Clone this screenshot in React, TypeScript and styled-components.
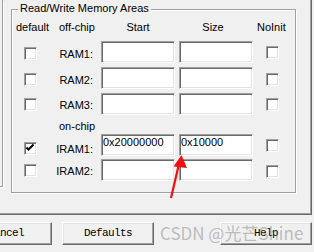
import React from "react";
import styled, { createGlobalStyle } from "styled-components";

const GlobalStyle = createGlobalStyle`
  html, body { margin: 0; padding: 0; background: #f0f0f0; }
  body { width: 314px; height: 252px; overflow: hidden; }
  #root { width: 314px; height: 252px; }
`;

const Dialog = styled.div`
  position: relative;
  width: 314px;
  height: 252px;
  overflow: hidden;
  background: #f0f0f0;
  font-family: "Liberation Sans", Arial, sans-serif;
  font-size: 11px;
  line-height: 13px;
  color: #000;
`;

const TabPage = styled.div`
  box-sizing: border-box;
  width: 312px;
  height: 215px;
  display: flex;
  align-items: flex-start;
  border-right: 1px solid #696969;
  border-bottom: 1px solid #696969;
  box-shadow: inset -1px -1px 0 #a0a0a0;
`;

const SideGroup = styled.div`
  box-sizing: border-box;
  flex: none;
  width: 3px;
  height: 187px;
  border-right: 1px solid #a0a0a0;
  border-bottom: 1px solid #a0a0a0;
  box-shadow: 1px 1px 0 #fff;
`;

const MemoryGroup = styled.div`
  position: relative;
  box-sizing: border-box;
  flex: none;
  width: 285px;
  height: 184px;
  margin: 9px 0 0 8px;
  padding: 10px 0 0 4px;
  border: 1px solid #a0a0a0;
  box-shadow: inset 1px 1px 0 #fff, 1px 1px 0 #fff;
`;

const GroupTitle = styled.span`
  position: absolute;
  top: -8px;
  left: 6px;
  padding: 0 2px;
  background: #f0f0f0;
  white-space: nowrap;
`;

const Grid = styled.div`
  display: grid;
  grid-template-columns: 35px 42px 74px 74px 34px;
  grid-template-rows: 21px 26px 26px 26px 15px 25px 22px;
  column-gap: 4px;
`;

const Header = styled.div<{ $align?: "left" | "center"; $pl?: number; $pr?: number }>`
  padding-top: 1px;
  padding-left: ${(p) => p.$pl ?? 0}px;
  padding-right: ${(p) => p.$pr ?? 0}px;
  text-align: ${(p) => p.$align ?? "left"};
  white-space: nowrap;
`;

const SectionLabel = styled.div`
  grid-column: 1 / -1;
  padding: 1px 0 0 43px;
  white-space: nowrap;
`;

const RowLabel = styled.div<{ $top: number }>`
  padding-top: ${(p) => p.$top}px;
  padding-right: 4px;
  text-align: right;
  white-space: nowrap;
`;

const CheckBox = styled.div<{ $top: number; $left: number }>`
  box-sizing: border-box;
  width: 13px;
  height: 13px;
  margin-top: ${(p) => p.$top}px;
  margin-left: ${(p) => p.$left}px;
  background: #fff;
  border: 1px solid;
  border-color: #a0a0a0 #fff #fff #a0a0a0;
  box-shadow: inset 1px 1px 0 #696969, inset -1px -1px 0 #e3e3e3;
  display: flex;
`;

const Edit = styled.div`
  box-sizing: border-box;
  height: 22px;
  padding: 1px 0 0 1px;
  background: #fff;
  border: 1px solid;
  border-color: #a0a0a0 #fff #fff #a0a0a0;
  box-shadow: inset 1px 1px 0 #696969, inset -1px -1px 0 #e3e3e3;
  white-space: nowrap;
  overflow: hidden;
`;

const ButtonRow = styled.div`
  display: flex;
  margin-top: 7px;
`;

const Button = styled.div<{ $ml: number }>`
  box-sizing: border-box;
  flex: none;
  width: 92px;
  height: 23px;
  margin-left: ${(p) => p.$ml}px;
  background: #f0f0f0;
  border: 1px solid;
  border-color: #fff #696969 #696969 #fff;
  box-shadow: inset -1px -1px 0 #a0a0a0, inset 1px 1px 0 #e3e3e3;
  font-family: "Liberation Mono", "Courier New", monospace;
  font-size: 11px;
  letter-spacing: -0.6px;
  line-height: 21px;
  text-align: center;
  white-space: nowrap;
`;

const Watermark = styled.div`
  position: absolute;
  left: 160px;
  top: 223px;
  font-family: "Noto Sans CJK SC", "Liberation Sans", sans-serif;
  font-size: 17px;
  line-height: 20px;
  color: rgba(110, 110, 110, 0.42);
  white-space: nowrap;
  pointer-events: none;
`;

const ArrowSvg = styled.svg`
  position: absolute;
  left: 165px;
  top: 150px;
  overflow: visible;
  pointer-events: none;
`;

const CheckMark = () => (
  <svg width="11" height="11" viewBox="0 0 11 11">
    <polyline points="1.5,4.5 3.5,6.5 8.5,1.5" fill="none" stroke="#000" strokeWidth="2" />
  </svg>
);

type Row = {
  label: string;
  start?: string;
  size?: string;
  checked?: boolean;
  lblTop: number;
  defTop: number;
  niTop: number;
};

const offChip: Row[] = [
  { label: "RAM1:", lblTop: 7, defTop: 6, niTop: 5 },
  { label: "RAM2:", lblTop: 7, defTop: 6, niTop: 6 },
  { label: "RAM3:", lblTop: 6, defTop: 5, niTop: 5 },
];

const onChip: Row[] = [
  { label: "IRAM1:", start: "0x20000000", size: "0x10000", checked: true, lblTop: 9, defTop: 8, niTop: 5 },
  { label: "IRAM2:", lblTop: 6, defTop: 5, niTop: 6 },
];

const MemoryRow = ({ row }: { row: Row }) => (
  <>
    <CheckBox $top={row.defTop} $left={8}>{row.checked ? <CheckMark /> : null}</CheckBox>
    <RowLabel $top={row.lblTop}>{row.label}</RowLabel>
    <Edit>{row.start ?? ""}</Edit>
    <Edit>{row.size ?? ""}</Edit>
    <CheckBox $top={row.niTop} $left={9} />
  </>
);

export default function App() {
  return (
    <>
      <GlobalStyle />
      <Dialog>
        <TabPage>
          <SideGroup />
          <MemoryGroup>
            <GroupTitle>Read/Write Memory Areas</GroupTitle>
            <Grid>
              <Header>default</Header>
              <Header $pl={4}>off-chip</Header>
              <Header $align="center">Start</Header>
              <Header $align="center" $pr={6}>Size</Header>
              <Header>NoInit</Header>
              {offChip.map((r) => (
                <MemoryRow key={r.label} row={r} />
              ))}
              <SectionLabel>on-chip</SectionLabel>
              {onChip.map((r) => (
                <MemoryRow key={r.label} row={r} />
              ))}
            </Grid>
          </MemoryGroup>
        </TabPage>
        <ButtonRow>
          <Button $ml={-40}>Cancel</Button>
          <Button $ml={10}>Defaults</Button>
          <Button $ml={66}>Help</Button>
        </ButtonRow>
        <Watermark>CSDN @光芒Shine</Watermark>
        <ArrowSvg width="30" height="55" viewBox="0 0 30 55">
          <line x1="6" y1="48" x2="13.5" y2="16" stroke="#ee1111" strokeWidth="2.2" />
          <polygon points="16.5,5 8.5,16.5 22,18" fill="#ee1111" />
        </ArrowSvg>
      </Dialog>
    </>
  );
}
